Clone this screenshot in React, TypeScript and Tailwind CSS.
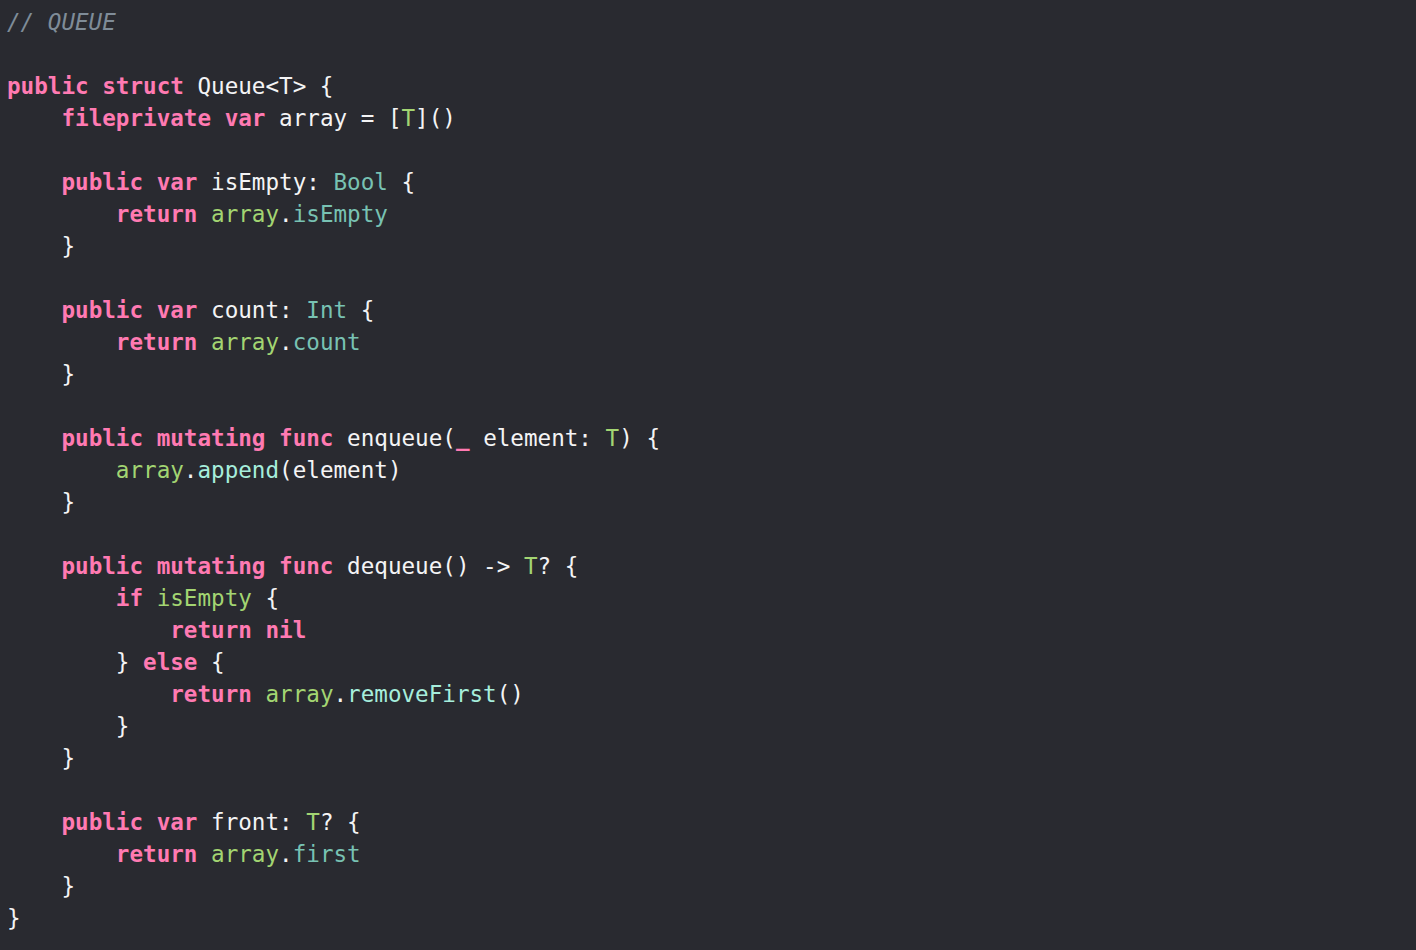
import React from "react";

type Tok = [string, string?];

// token kinds: k = keyword, p = plain, t = type, f = method, v = project var, c = comment
const cls: Record<string, string> = {
  k: "font-bold text-[#ff7ab2]",
  p: "text-[#f4f4f5]",
  t: "text-[#78c2b3]",
  f: "text-[#a6eedc]",
  v: "text-[#a3d572]",
  c: "italic text-[#7f8c98]",
};

const lines: Tok[][] = [
  [["// QUEUE", "c"]],
  [],
  [["public struct", "k"], [" Queue<T> {"]],
  [["    "], ["fileprivate var", "k"], [" array = ["], ["T", "v"], ["]()"]],
  [],
  [["    "], ["public var", "k"], [" isEmpty: "], ["Bool", "t"], [" {"]],
  [["        "], ["return", "k"], [" "], ["array", "v"], ["."], ["isEmpty", "t"]],
  [["    }"]],
  [],
  [["    "], ["public var", "k"], [" count: "], ["Int", "t"], [" {"]],
  [["        "], ["return", "k"], [" "], ["array", "v"], ["."], ["count", "t"]],
  [["    }"]],
  [],
  [["    "], ["public mutating func", "k"], [" enqueue("], ["_", "k"], [" element: "], ["T", "v"], [") {"]],
  [["        "], ["array", "v"], ["."], ["append", "f"], ["(element)"]],
  [["    }"]],
  [],
  [["    "], ["public mutating func", "k"], [" dequeue() -> "], ["T", "v"], ["? {"]],
  [["        "], ["if", "k"], [" "], ["isEmpty", "v"], [" {"]],
  [["            "], ["return nil", "k"]],
  [["        } "], ["else", "k"], [" {"]],
  [["            "], ["return", "k"], [" "], ["array", "v"], ["."], ["removeFirst", "f"], ["()"]],
  [["        }"]],
  [["    }"]],
  [],
  [["    "], ["public var", "k"], [" front: "], ["T", "v"], ["? {"]],
  [["        "], ["return", "k"], [" "], ["array", "v"], ["."], ["first", "t"]],
  [["    }"]],
  [["}"]],
];

export default function App() {
  return (
    <div className="h-[950px] w-[1416px] overflow-hidden bg-[#292a30] pl-[7px] pt-[6px] font-['DejaVu_Sans_Mono',monospace] text-[22.6px] leading-[32px]">
      {lines.map((line, i) => (
        <div key={i} className="h-8 whitespace-pre">
          {line.map(([text, kind = "p"], j) => (
            <span key={j} className={cls[kind]}>
              {text}
            </span>
          ))}
        </div>
      ))}
    </div>
  );
}
